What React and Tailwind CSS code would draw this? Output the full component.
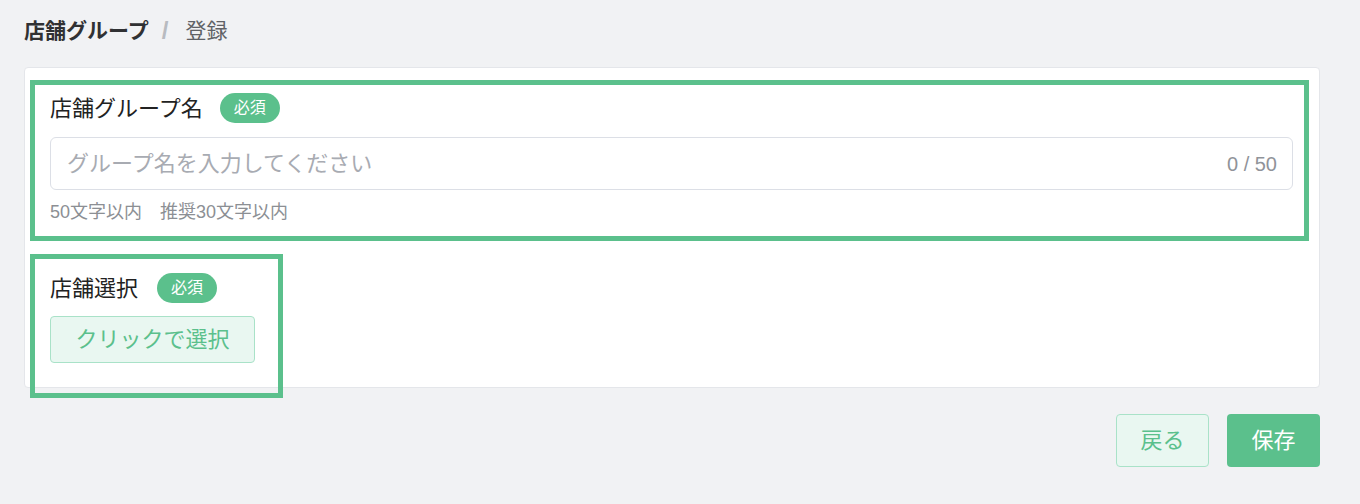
import { useState } from 'react';

// store group register form
const App = () => {
  const [groupName, setGroupName] = useState('');

  return (
    <div className="min-h-screen bg-[#f1f2f4] pl-6 pr-10 pt-[19px] font-['Liberation_Sans','Noto_Sans_CJK_JP',sans-serif]">
      {/* Breadcrumb */}
      <div className="flex items-center h-6 text-[21px] leading-6">
        <span className="font-bold text-[#303133]">店舗グループ</span>
        <span className="ml-[13px] mr-[17px] text-[24px] font-bold text-[#b8bbc0]">/</span>
        <span className="text-[#606266]">登録</span>
      </div>

      {/* Form card */}
      <div className="mt-6 h-[321px] bg-white border border-[#e4e6ea] rounded pl-[10px] pr-[15px] pt-[17px]">
        {/* Group name */}
        <div className="outline-[5px] outline-solid outline-[#5bc08c] pl-[15px] pr-[11px] pt-2 pb-[14px]">
          <div className="flex items-center h-[30px]">
            <span className="text-[22px] text-[#222]">店舗グループ名</span>
            <span className="ml-[17px] h-[30px] px-[14px] rounded-full bg-[#5bc08c] text-white text-[16px] leading-[30px]">必須</span>
          </div>
          <div className="mt-[14px] h-[53px] flex items-center border border-[#dcdfe6] rounded-md pl-4 pr-[15px]">
            <input
              value={groupName}
              maxLength={50}
              onChange={(e) => setGroupName(e.target.value)}
              placeholder="グループ名を入力してください"
              className="flex-1 outline-none text-[22px] text-[#333] placeholder:text-[#a8abb2] bg-transparent"
            />
            <span className="text-[20px] text-[#909399]">{groupName.length} / 50</span>
          </div>
          <p className="mt-3 text-[18px] leading-5 text-[#8c8f94]">50文字以内　推奨30文字以内</p>
        </div>

        {/* Store select */}
        <div className="mt-[23px] w-[243px] outline-[5px] outline-solid outline-[#5bc08c] pl-[15px] pt-[14px] pb-[30px]">
          <div className="flex items-center h-[30px]">
            <span className="text-[22px] text-[#222]">店舗選択</span>
            <span className="ml-[19px] h-[30px] px-[14px] rounded-full bg-[#5bc08c] text-white text-[16px] leading-[30px]">必須</span>
          </div>
          <button className="mt-[13px] w-[205px] h-[47px] rounded bg-[#e9f7f1] border border-[#a9e2c8] text-[#5bc08c] text-[22px]">
            クリックで選択
          </button>
        </div>
      </div>

      {/* Actions */}
      <div className="mt-[26px] flex justify-end gap-[18px]">
        <button className="w-[93px] h-[53px] rounded bg-[#e9f7f1] border border-[#a9e2c8] text-[#5bc08c] text-[22px]">戻る</button>
        <button className="w-[93px] h-[53px] rounded bg-[#5bc08c] text-white text-[22px]">保存</button>
      </div>
    </div>
  );
};

export default App;
